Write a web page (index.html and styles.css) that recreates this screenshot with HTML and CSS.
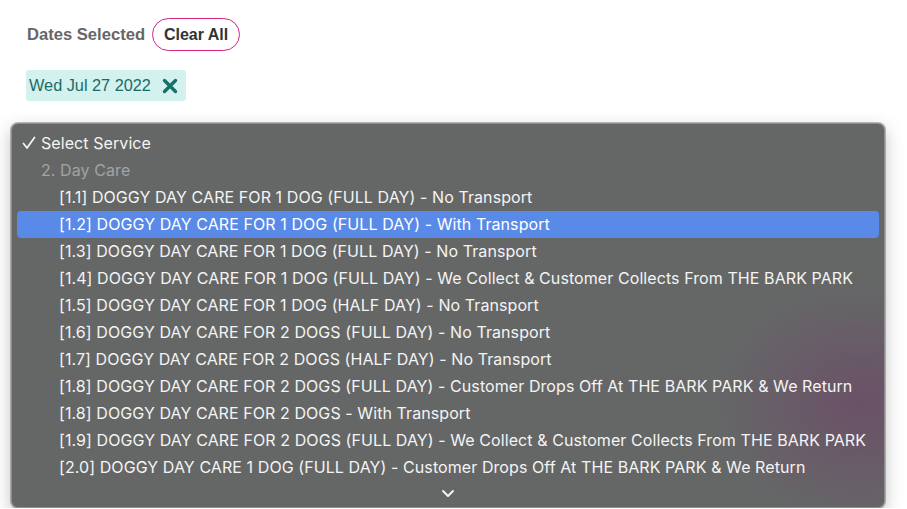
FILE: index.html
```html
<!DOCTYPE html>
<html>
<head>
<meta charset="utf-8">
<link rel="stylesheet" href="styles.css">
</head>
<body>
<div class="page">
  <div class="dates-row">
    <span class="dates-label">Dates Selected</span>
    <button class="clear-btn">Clear All</button>
  </div>
  <div class="tags">
    <span class="tag">Wed Jul 27 2022
      <svg class="tag-x" width="16" height="16" viewBox="0 0 16 16"><path d="M2.5 2.5 L13.5 13.5 M13.5 2.5 L2.5 13.5" stroke="#17706a" stroke-width="3.4" stroke-linecap="round"/></svg>
    </span>
  </div>
  <div class="menu">
    <div class="row checked"><svg class="check" width="14" height="14" viewBox="0 0 14 14"><path d="M1.5 7.5 L5 12 L12.5 1.5" fill="none" stroke="#f4f4f4" stroke-width="1.8" stroke-linecap="round" stroke-linejoin="round"/></svg>Select Service</div>
    <div class="row group">2. Day Care</div>
    <div class="row opt">[1.1] DOGGY DAY CARE FOR 1 DOG (FULL DAY) - No Transport</div>
    <div class="row opt active">[1.2] DOGGY DAY CARE FOR 1 DOG (FULL DAY) - With Transport</div>
    <div class="row opt">[1.3] DOGGY DAY CARE FOR 1 DOG (FULL DAY) - No Transport</div>
    <div class="row opt">[1.4] DOGGY DAY CARE FOR 1 DOG (FULL DAY) - We Collect &amp; Customer Collects From THE BARK PARK</div>
    <div class="row opt">[1.5] DOGGY DAY CARE FOR 1 DOG (HALF DAY) - No Transport</div>
    <div class="row opt">[1.6] DOGGY DAY CARE FOR 2 DOGS (FULL DAY) - No Transport</div>
    <div class="row opt">[1.7] DOGGY DAY CARE FOR 2 DOGS (HALF DAY) - No Transport</div>
    <div class="row opt">[1.8] DOGGY DAY CARE FOR 2 DOGS (FULL DAY) - Customer Drops Off At THE BARK PARK &amp; We Return</div>
    <div class="row opt">[1.8] DOGGY DAY CARE FOR 2 DOGS - With Transport</div>
    <div class="row opt">[1.9] DOGGY DAY CARE FOR 2 DOGS (FULL DAY) - We Collect &amp; Customer Collects From THE BARK PARK</div>
    <div class="row opt">[2.0] DOGGY DAY CARE 1 DOG (FULL DAY) - Customer Drops Off At THE BARK PARK &amp; We Return</div>
    <div class="more">
      <svg width="14" height="9" viewBox="0 0 14 9"><path d="M2 2 L7 7 L12 2" fill="none" stroke="#f2f2f2" stroke-width="2" stroke-linecap="round" stroke-linejoin="round"/></svg>
    </div>
  </div>
</div>
</body>
</html>
```
FILE: styles.css
```css
html, body {
  margin: 0;
  padding: 0;
  background: #ffffff;
  font-family: "Liberation Sans", Arial, sans-serif;
  overflow: hidden;
}
.page {
  display: flex;
  flex-direction: column;
  padding: 18px 0 0 0;
}
.dates-row {
  display: flex;
  align-items: center;
  gap: 7px;
  padding-left: 27px;
}
.dates-label {
  font-weight: bold;
  font-size: 16.6px;
  color: #666666;
}
.clear-btn {
  height: 33px;
  width: 88px;
  border: 1.5px solid #d3227f;
  border-radius: 17px;
  background: #ffffff;
  font-family: "Liberation Sans", Arial, sans-serif;
  font-weight: bold;
  font-size: 16px;
  color: #333333;
  padding: 0;
}
.tags {
  display: flex;
  padding: 19px 0 0 26px;
}
.tag {
  display: flex;
  align-items: center;
  gap: 11px;
  height: 31px;
  padding: 0 8px 0 3px;
  background: #d2f1ef;
  border-radius: 3px;
  color: #1b6b66;
  font-size: 16.3px;
}
.menu {
  margin: 22px 0 0 11px;
  width: 874px;
  height: 385px;
  box-sizing: border-box;
  border: 1px solid #8e8e8e;
  border-radius: 7px;
  background:
    radial-gradient(ellipse 150px 120px at 850px 280px, rgba(112,62,104,0.55), rgba(112,62,104,0) 100%),
    #656767;
  box-shadow: 0 0 0 1px rgba(0,0,0,0.25), 0 6px 18px rgba(0,0,0,0.25);
  padding: 6px 5px 0 5px;
  display: flex;
  flex-direction: column;
  overflow: hidden;
  font-family: Inter, "Liberation Sans", sans-serif;
}
.row {
  height: 27px;
  line-height: 27px;
  font-size: 16px;
  letter-spacing: 0.08px;
  color: #f4f4f4;
  white-space: nowrap;
  border-radius: 4px;
  flex: none;
}
.checked {
  display: flex;
  align-items: center;
  padding-left: 5px;
}
.check {
  margin-right: 5px;
  margin-top: -1px;
}
.group {
  padding-left: 24px;
  color: #a3a3a3;
}
.opt {
  padding-left: 42px;
}
.active {
  background: #5a8ae8;
  color: #ffffff;
}
.more {
  height: 24px;
  display: flex;
  justify-content: center;
  align-items: center;
}
```
